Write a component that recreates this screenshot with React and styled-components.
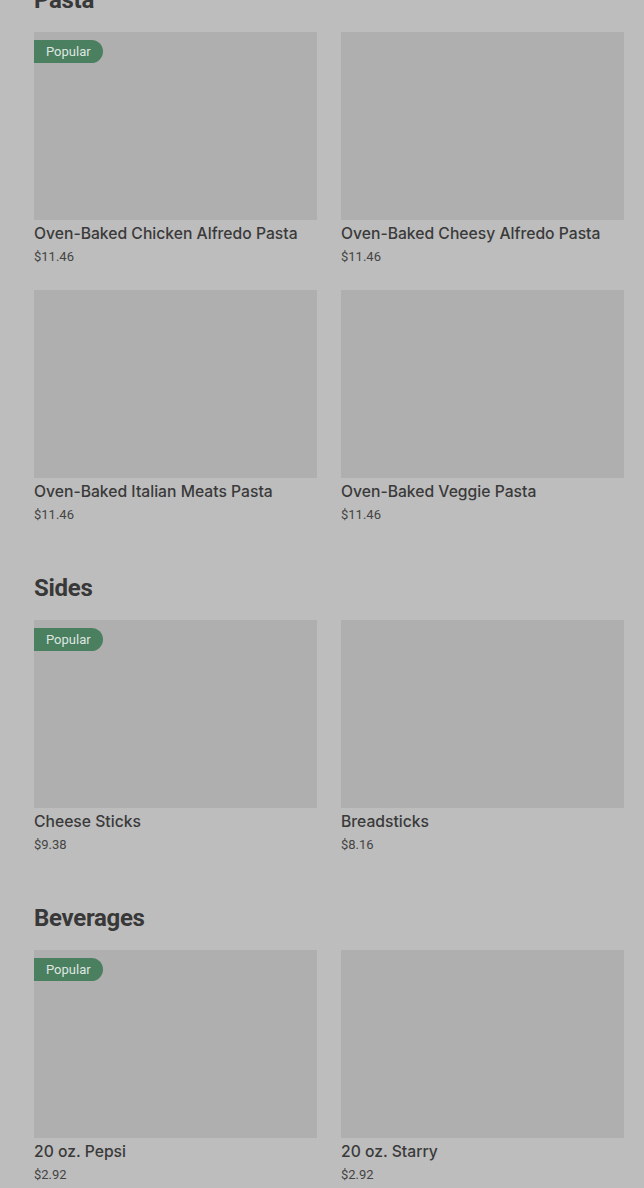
import React from "react";
import styled, { createGlobalStyle } from "styled-components";

const Global = createGlobalStyle`
  html, body { margin: 0; padding: 0; background: #bdbdbd; overflow: hidden; }
  body { font-family: Roboto, "Liberation Sans", Arial, sans-serif; }
`;

const Page = styled.main`
  margin-top: -16px;
  padding: 0 20px 0 34px;
  display: flex;
  flex-direction: column;
  gap: 47px;
`;

const Section = styled.section`
  display: flex;
  flex-direction: column;
  gap: 16px;
`;

const Heading = styled.h2`
  margin: 0;
  font-size: 24px;
  line-height: 32px;
  font-weight: 700;
  color: #383838;
  letter-spacing: -0.3px;
`;

const Grid = styled.div`
  display: grid;
  grid-template-columns: 283px 283px;
  column-gap: 24px;
  row-gap: 23px;
`;

const Card = styled.div`
  display: flex;
  flex-direction: column;
`;

const Thumb = styled.div`
  position: relative;
  height: 188px;
  background: #afafaf;
`;

const Badge = styled.span`
  position: absolute;
  top: 8px;
  left: 0;
  height: 23px;
  padding: 0 12px;
  display: flex;
  align-items: center;
  background: #4a7f5f;
  color: #dfe6e1;
  font-size: 13px;
  border-radius: 0 12px 12px 0;
`;

const Title = styled.div`
  margin-top: 3px;
  font-family: Inter, Roboto, sans-serif;
  font-size: 15.7px;
  line-height: 22px;
  font-weight: 500;
  color: #3a3a3a;
`;

const Price = styled.div`
  margin-top: 2px;
  font-size: 13px;
  line-height: 20px;
  color: #444;
`;

const data = [
  {
    name: "Pasta",
    items: [
      { t: "Oven-Baked Chicken Alfredo Pasta", p: "$11.46", pop: true },
      { t: "Oven-Baked Cheesy Alfredo Pasta", p: "$11.46" },
      { t: "Oven-Baked Italian Meats Pasta", p: "$11.46" },
      { t: "Oven-Baked Veggie Pasta", p: "$11.46" },
    ],
  },
  {
    name: "Sides",
    items: [
      { t: "Cheese Sticks", p: "$9.38", pop: true },
      { t: "Breadsticks", p: "$8.16" },
    ],
  },
  {
    name: "Beverages",
    items: [
      { t: "20 oz. Pepsi", p: "$2.92", pop: true },
      { t: "20 oz. Starry", p: "$2.92" },
    ],
  },
];

export default function App() {
  return (
    <>
      <Global />
      <Page>
        {data.map((s) => (
          <Section key={s.name}>
            <Heading>{s.name}</Heading>
            <Grid>
              {s.items.map((it) => (
                <Card key={it.t}>
                  <Thumb>{it.pop && <Badge>Popular</Badge>}</Thumb>
                  <Title>{it.t}</Title>
                  <Price>{it.p}</Price>
                </Card>
              ))}
            </Grid>
          </Section>
        ))}
      </Page>
    </>
  );
}
